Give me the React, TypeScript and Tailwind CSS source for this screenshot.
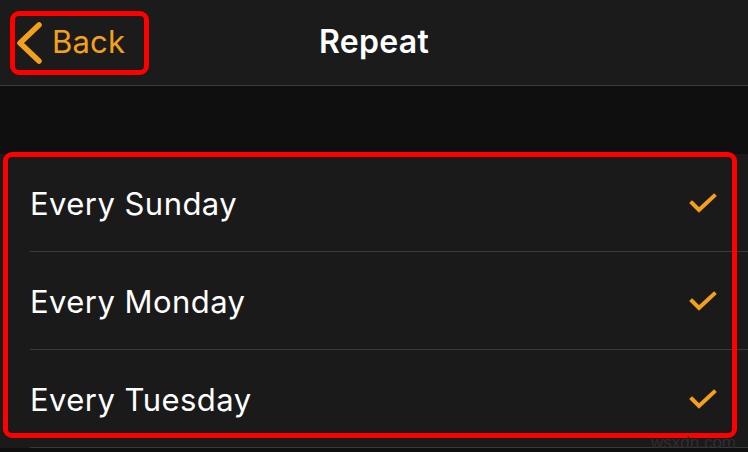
import React from "react";

const Check = () => (
  <svg width="28" height="22" viewBox="0 0 28 22" fill="none">
    <path d="M3 11 L10 18 L25 4" stroke="#f5a01a" strokeWidth="4" strokeLinecap="square" strokeLinejoin="miter" />
  </svg>
);

const rows = ["Every Sunday", "Every Monday", "Every Tuesday"];

export default function App() {
  return (
    <div
      className="relative w-[748px] h-[452px] overflow-hidden bg-[#0f0f0f] text-white"
      style={{ fontFamily: "Inter, 'Noto Sans', sans-serif" }}
    >
      <div className="h-[86px] bg-[#1b1b1b] border-b border-[#3a3a3a] flex items-center relative">
        <div className="flex items-center pl-[16px] gap-[9px] text-[#f5a01a]">
          <svg width="27" height="42" viewBox="0 0 27 42" fill="none">
            <path d="M23 3 L4 21 L23 39" stroke="#f5a01a" strokeWidth="5.5" strokeLinecap="round" strokeLinejoin="round" />
          </svg>
          <span className="text-[31px] leading-none mt-[-2px] tracking-[0.2px]">Back</span>
        </div>
        <div className="absolute inset-0 flex items-center justify-center pointer-events-none">
          <span className="text-[32px] font-semibold leading-none mt-[-2px] tracking-[0.3px]">Repeat</span>
        </div>
      </div>
      <div className="h-[68px]" />
      <div className="bg-[#1a1a1a]">
        {rows.map((r) => (
          <div key={r} className="h-[98px] pl-[30px]">
            <div className="h-full flex items-center justify-between pr-[31px] border-b border-[#3a3a3a]">
              <span className="text-[31px] leading-none tracking-[0.45px] mt-[2px]">{r}</span>
              <Check />
            </div>
          </div>
        ))}
      </div>
      <div className="absolute left-[10px] top-[11px] w-[139px] h-[64px] border-[5px] border-[#ff0000] rounded-[9px]" />
      <div className="absolute left-[3px] top-[152px] w-[734px] h-[286px] border-[5px] border-[#ff0000] rounded-[9px]" />
      <div className="absolute right-[12px] top-[434px] text-[17px] leading-none text-[#2e2e2e]" style={{ fontFamily: "'Liberation Sans', sans-serif" }}>
        wsxdn.com
      </div>
    </div>
  );
}
